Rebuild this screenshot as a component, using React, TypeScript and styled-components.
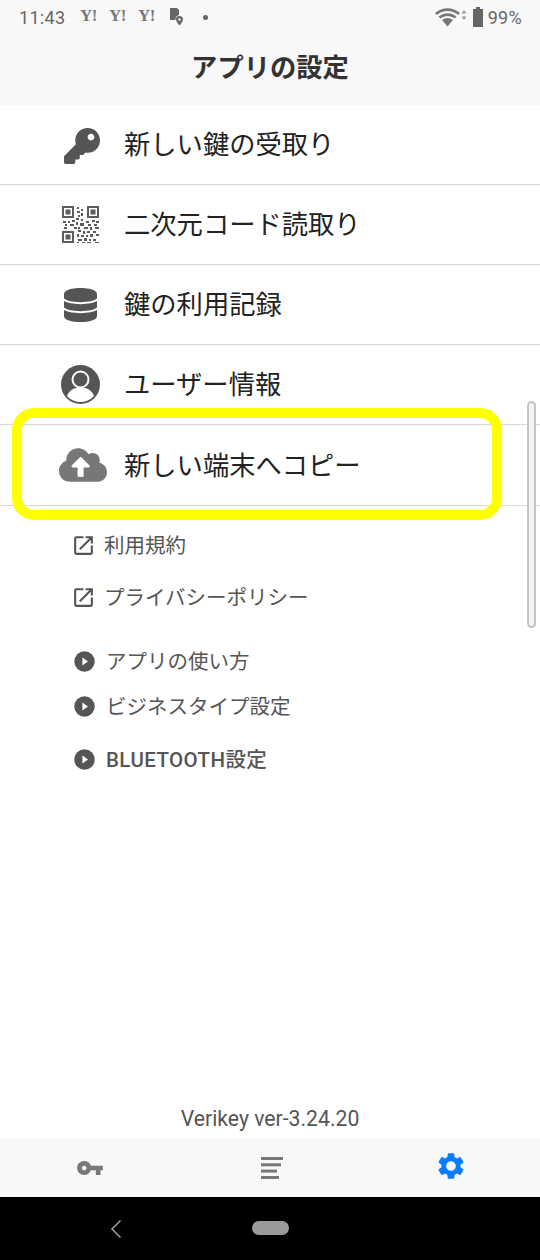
import React from "react";
import styled, { createGlobalStyle } from "styled-components";
import { FaKey, FaCloudUploadAlt } from "react-icons/fa";
import { MdOutlineOpenInNew, MdVpnKey, MdSettings } from "react-icons/md";

const GlobalStyle = createGlobalStyle`
  html, body {
    margin: 0;
    padding: 0;
    background: #fff;
    font-family: Roboto, "Noto Sans CJK JP", sans-serif;
  }
`;

const Page = styled.div`
  position: relative;
  width: 540px;
  height: 1260px;
  display: flex;
  flex-direction: column;
  overflow: hidden;
  background: #fff;
`;

const TopArea = styled.header`
  background: #f8f8f8;
  height: 105px;
  display: flex;
  flex-direction: column;
`;

const StatusBar = styled.div`
  height: 34px;
  display: flex;
  align-items: center;
  padding: 0 18px 0 19px;
  color: #666;
`;

const Clock = styled.span`
  font-size: 18px;
  width: 61px;
  letter-spacing: 0.3px;
`;

const YahooMark = styled.span`
  font-family: "Liberation Serif", serif;
  font-weight: bold;
  font-size: 17px;
  width: 29px;
  letter-spacing: -0.5px;
  color: #777;
  margin-top: -2px;
`;

const PinSlot = styled.span`
  display: flex;
  margin-left: 3px;
`;

const StatusDot = styled.span`
  width: 5px;
  height: 5px;
  border-radius: 50%;
  background: #666;
  margin-left: 20px;
`;

const StatusRight = styled.div`
  margin-left: auto;
  display: flex;
  align-items: center;
  gap: 5px;
`;

const BatteryText = styled.span`
  font-size: 18px;
  letter-spacing: 0.3px;
`;

const Title = styled.h1`
  margin: 0;
  flex: 1;
  display: flex;
  align-items: center;
  justify-content: center;
  padding-bottom: 8px;
  font-size: 26.3px;
  font-weight: 700;
  color: #333;
`;

const MenuRow = styled.div<{ $tall?: boolean }>`
  height: ${({ $tall }) => ($tall ? 80 : 79)}px;
  border-bottom: 1px solid #d8d8d8;
  display: flex;
  align-items: center;
  font-size: 26.3px;
  color: #222;
`;

const MenuLabel = styled.span`
  margin-bottom: 4px;
`;

const MenuIcon = styled.span<{ $tone?: string; $dx?: number; $dy?: number }>`
  box-sizing: border-box;
  width: 40px;
  margin: 0 24px 0 60px;
  display: flex;
  justify-content: center;
  padding-left: ${({ $dx }) => $dx || 0}px;
  padding-top: ${({ $dy }) => $dy || 0}px;
  color: ${({ $tone }) => $tone || "#555"};

  svg {
    flex-shrink: 0;
  }
`;

const LinkRow = styled.div<{ $top: number; $strong?: boolean }>`
  height: 40px;
  margin-top: ${({ $top }) => $top}px;
  display: flex;
  align-items: center;
  font-size: 20.5px;
  font-weight: ${({ $strong }) => ($strong ? 500 : 400)};
  letter-spacing: ${({ $strong }) => ($strong ? "0.4px" : "0")};
  color: #555;
`;

const LinkLabel = styled.span<{ $dx?: number }>`
  margin: 0 0 2px ${({ $dx }) => $dx || 0}px;
`;

const LinkIcon = styled.span`
  width: 22px;
  margin: 0 10px 0 73px;
  display: flex;
  justify-content: center;
  color: #555;
`;

const OpenIcon = styled(MdOutlineOpenInNew)`
  flex-shrink: 0;
  margin-left: -2px;
`;

const Version = styled.div`
  margin-top: auto;
  height: 39px;
  text-align: center;
  font-size: 21.2px;
  line-height: 39px;
  color: #555;
`;

const TabBar = styled.nav`
  height: 59px;
  background: #f8f8f8;
  display: grid;
  grid-template-columns: repeat(3, 1fr);
  align-items: center;
  justify-items: center;
  color: #777;
`;

const LinesSlot = styled.span`
  display: flex;
  margin-left: 3px;
`;

const ActiveTab = styled.span`
  display: flex;
  color: #0a7cff;
  margin: 0 0 3px 2px;
`;

const NavBar = styled.div`
  height: 63px;
  background: #000;
  display: flex;
  align-items: center;
  padding: 0 0 0 110px;
`;

const HomePill = styled.span`
  width: 37px;
  height: 14px;
  border-radius: 7px;
  background: #9a9a9a;
  margin-left: 130px;
  margin-bottom: 1px;
`;

const Highlight = styled.div`
  position: absolute;
  left: 12px;
  top: 408px;
  width: 490px;
  height: 112px;
  box-sizing: border-box;
  border: 10px solid #ffff00;
  border-radius: 22px;
  pointer-events: none;
`;

const ScrollThumb = styled.div`
  position: absolute;
  left: 527px;
  top: 401px;
  width: 9px;
  height: 227px;
  box-sizing: border-box;
  border: 2px solid #c4c4c4;
  border-radius: 5px;
  background: #f4f4f4;
`;

const PlayIcon = () => (
  <svg width="21" height="21" viewBox="0 0 21 21">
    <circle cx="10.5" cy="10.5" r="10.2" fill="#555" />
    <path d="M8.4 6.6 14 10.5 8.4 14.4Z" fill="#fff" />
  </svg>
);

// three finder squares plus some noise, close enough to the real code
const QrIcon = () => {
  const noise = [
    "15 1 2 2", "19 3 2 2", "15 5 3 2", "19 7 2 3", "16 9 2 2", "1 15 3 2", "6 15 2 2", "10 14 3 2", "14 12 3 2",
    "19 13 2 2", "24 15 3 2", "30 14 3 2", "34 15 3 2", "3 18 2 2", "8 18 4 2", "14 16 2 3", "18 17 4 3", "26 18 3 2",
    "32 18 3 2", "2 21 3 2", "12 21 3 2", "16 21 2 2", "22 21 4 2", "28 21 2 3", "33 21 4 2", "16 24 3 2", "21 25 2 3",
    "25 25 3 2", "31 25 3 2", "15 28 2 3", "19 29 3 2", "24 29 2 2", "28 28 3 3", "34 28 3 2", "16 33 4 2", "22 32 3 3",
    "27 33 2 2", "31 33 3 2", "15 36 2 1", "20 36 3 1", "25 36 4 1", "33 36 4 1",
  ];
  return (
    <svg width="37" height="38" viewBox="0 0 37 38" fill="#5c5c5c">
      {[[0, 0], [25, 0], [0, 25]].map(([x, y]) => (
        <g key={`${x}-${y}`}>
          <path fillRule="evenodd" d={`M${x} ${y}h12v12h-12zM${x + 2} ${y + 2}v8h8v-8z`} />
          <rect x={x + 3.5} y={y + 3.5} width="5" height="5" />
        </g>
      ))}
      {noise.map((n) => {
        const [x, y, w, h] = n.split(" ").map(Number);
        return <rect key={n} x={x} y={y} width={w} height={h} />;
      })}
    </svg>
  );
};

const DatabaseIcon = () => (
  <svg width="33" height="34" viewBox="0 0 33 34">
    <path
      d="M0 6C0 2 8 0 16.5 0S33 2 33 6V28C33 32 25 34 16.5 34S0 32 0 28Z"
      fill="#555"
    />
    <path
      d="M-1 11C4 16.500 29 16.500 34 11M-1 20C4 25.500 29 25.500 34 20"
      fill="none"
      stroke="#fff"
      strokeWidth="2"
    />
  </svg>
);

const UserIcon = () => (
  <svg width="39" height="39" viewBox="0 0 39 39">
    <circle cx="19.5" cy="19.5" r="19.5" fill="#555" />
    <path d="M6 31c2-6 7.500-8.500 13.500-8.500S31 25 33 31c-3.500 4-8.500 6-13.500 6S9.500 35 6 31z" fill="#fff" />
    <circle cx="19.5" cy="14.500" r="8" fill="#555" stroke="#fff" strokeWidth="2" />
  </svg>
);

const WifiIcon = () => (
  <svg width="34" height="20" viewBox="0 0 34 20" fill="#777">
    <path d="M1 6C8-.5 19-.5 26 6l-1.800 2C18 2.500 9 2.500 2.800 8Z" />
    <path d="M4.500 9.500C10 5 17 5 22.500 9.500l-1.800 2C16.500 8 10.500 8 6.300 11.500Z" />
    <path d="M8 13c3.500-2.800 7.500-2.800 11 0l-5.500 6.500Z" />
    <path d="M30 3l2.500 3.500h-5zM30 13l-2.500-3.500h5z" fill="#999" />
  </svg>
);

const BatteryIcon = () => (
  <svg width="10" height="20" viewBox="0 0 10 20" fill="#666">
    <path d="M3 0h4v2h3v18H0V2h3z" />
  </svg>
);

const SimPinIcon = () => (
  <svg width="13" height="18" viewBox="0 0 13 18" fill="#666">
    <path d="M0 0h7l2 2v5a5 5 0 0 0-3.500 5H0z" />
    <path fillRule="evenodd" d="M9.500 8a3.500 3.500 0 0 1 3.500 3.500c0 2-3.500 6-3.500 6S6 13.500 6 11.500A3.500 3.500 0 0 1 9.500 8zm0 2.200a1.300 1.300 0 1 0 0 2.600 1.300 1.300 0 0 0 0-2.600z" />
  </svg>
);

const LinesIcon = () => (
  <svg width="22" height="22" viewBox="0 0 22 22" fill="#777">
    <rect x="0" y="0" width="22" height="3" />
    <rect x="0" y="6.300" width="20" height="3" />
    <rect x="0" y="12.600" width="16" height="3" />
    <rect x="0" y="19" width="18" height="3" />
  </svg>
);

const BackIcon = () => (
  <svg width="12" height="20" viewBox="0 0 12 20" fill="none" stroke="#9a9a9a" strokeWidth="1.600">
    <path d="M10.500 1.500 2 10l8.500 8.500" />
  </svg>
);

const App: React.FC = () => {
  return (
    <Page>
      <GlobalStyle />
      <TopArea>
        <StatusBar>
          <Clock>11:43</Clock>
          <YahooMark>Y!</YahooMark>
          <YahooMark>Y!</YahooMark>
          <YahooMark>Y!</YahooMark>
          <PinSlot><SimPinIcon /></PinSlot>
          <StatusDot />
          <StatusRight>
            <WifiIcon />
            <BatteryIcon />
            <BatteryText>99%</BatteryText>
          </StatusRight>
        </StatusBar>
        <Title>アプリの設定</Title>
      </TopArea>

      <MenuRow>
        <MenuIcon $dx={3} $dy={3}><FaKey size={36} /></MenuIcon>
        <MenuLabel>新しい鍵の受取り</MenuLabel>
      </MenuRow>
      <MenuRow>
        <MenuIcon><QrIcon /></MenuIcon>
        <MenuLabel>二次元コード読取り</MenuLabel>
      </MenuRow>
      <MenuRow>
        <MenuIcon><DatabaseIcon /></MenuIcon>
        <MenuLabel>鍵の利用記録</MenuLabel>
      </MenuRow>
      <MenuRow>
        <MenuIcon><UserIcon /></MenuIcon>
        <MenuLabel>ユーザー情報</MenuLabel>
      </MenuRow>
      <MenuRow $tall>
        <MenuIcon $tone="#777" $dx={5}><FaCloudUploadAlt size={48} /></MenuIcon>
        <MenuLabel>新しい端末へコピー</MenuLabel>
      </MenuRow>

      <LinkRow $top={19}>
        <LinkIcon><OpenIcon size={25} /></LinkIcon>
        <LinkLabel $dx={-1}>利用規約</LinkLabel>
      </LinkRow>
      <LinkRow $top={12}>
        <LinkIcon><OpenIcon size={25} /></LinkIcon>
        <LinkLabel $dx={-1}>プライバシーポリシー</LinkLabel>
      </LinkRow>
      <LinkRow $top={24}>
        <LinkIcon><PlayIcon /></LinkIcon>
        <LinkLabel $dx={1}>アプリの使い方</LinkLabel>
      </LinkRow>
      <LinkRow $top={5}>
        <LinkIcon><PlayIcon /></LinkIcon>
        <LinkLabel $dx={1}>ビジネスタイプ設定</LinkLabel>
      </LinkRow>
      <LinkRow $top={13} $strong>
        <LinkIcon><PlayIcon /></LinkIcon>
        <LinkLabel $dx={1}>BLUETOOTH設定</LinkLabel>
      </LinkRow>

      <Version>Verikey ver-3.24.20</Version>
      <TabBar>
        <MdVpnKey size={28} />
        <LinesSlot><LinesIcon /></LinesSlot>
        <ActiveTab><MdSettings size={32} /></ActiveTab>
      </TabBar>
      <NavBar>
        <BackIcon />
        <HomePill />
      </NavBar>

      <Highlight />
      <ScrollThumb />
    </Page>
  );
};

export default App;
